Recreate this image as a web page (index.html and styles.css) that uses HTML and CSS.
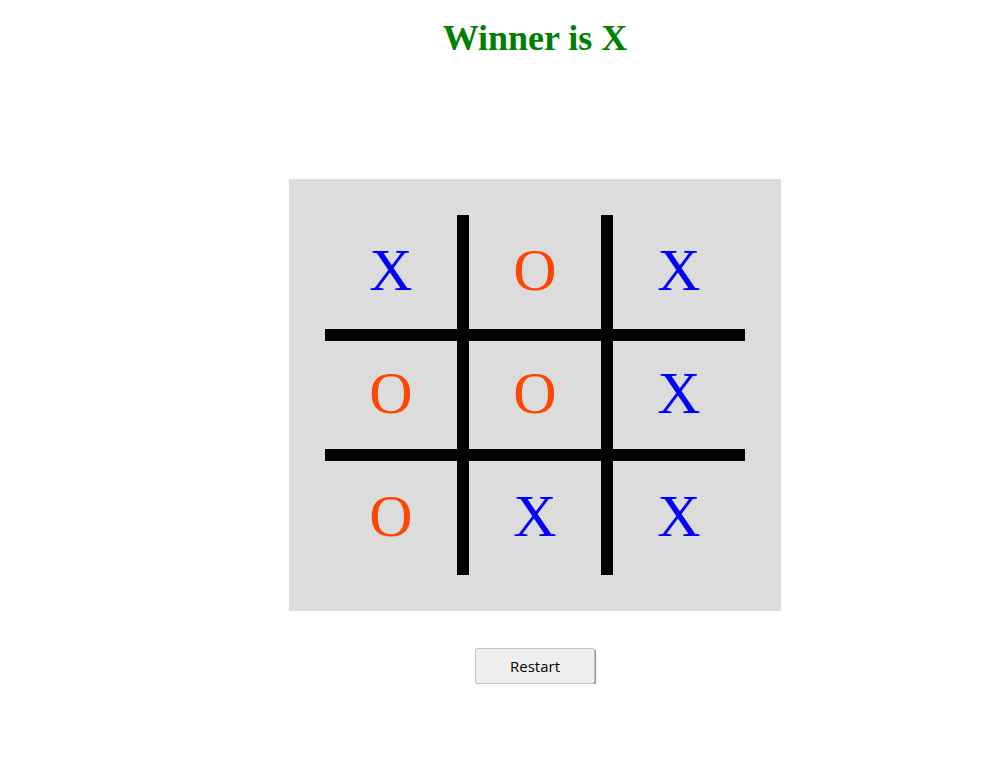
FILE: index.html
```html
<!DOCTYPE html>
<html>
<head>
<meta charset="utf-8">
<title>Tic Tac Toe</title>
<link rel="stylesheet" href="styles.css">
</head>
<body>
<div class="page">
  <h1 class="status">Winner is X</h1>
  <div class="board">
    <div class="grid">
      <div class="cell r1 c1 x">X</div>
      <div class="cell r1 c2 o">O</div>
      <div class="cell r1 c3 x">X</div>
      <div class="cell r2 c1 o">O</div>
      <div class="cell r2 c2 o">O</div>
      <div class="cell r2 c3 x">X</div>
      <div class="cell r3 c1 o">O</div>
      <div class="cell r3 c2 x">X</div>
      <div class="cell r3 c3 x">X</div>
      <div class="line vline v1"></div>
      <div class="line vline v2"></div>
      <div class="line hline h1"></div>
      <div class="line hline h2"></div>
    </div>
  </div>
  <button class="restart" type="button">Restart</button>
</div>
</body>
</html>
```
FILE: styles.css
```css
html, body {
  margin: 0;
  padding: 0;
  background: #ffffff;
}

.page {
  display: flex;
  flex-direction: column;
  align-items: center;
  padding-left: 74px;
}

.status {
  margin: 17px 0 0 0;
  font-family: "Liberation Serif", "Times New Roman", serif;
  font-size: 36px;
  font-weight: bold;
  color: #008000;
  line-height: normal;
}

.board {
  margin-top: 120px;
  padding: 36px;
  background: #dcdcdc;
}

.grid {
  display: grid;
  grid-template-columns: 132px 12px 132px 12px 132px;
  grid-template-rows: 114px 12px 108px 12px 114px;
}

.cell {
  display: flex;
  align-items: center;
  justify-content: center;
  padding-bottom: 4px;
  font-family: "Liberation Serif", "Times New Roman", serif;
  font-size: 60px;
  line-height: normal;
}

.cell.x { color: #0000ff; }
.cell.o { color: #ff4500; }

.r1 { grid-row: 1; }
.r2 { grid-row: 3; }
.r3 { grid-row: 5; }
.c1 { grid-column: 1; }
.c2 { grid-column: 3; }
.c3 { grid-column: 5; }

.line { background: #000000; }
.vline { grid-row: 1 / 6; }
.v1 { grid-column: 2; }
.v2 { grid-column: 4; }
.hline { grid-column: 1 / 6; }
.h1 { grid-row: 2; }
.h2 { grid-row: 4; }

.restart {
  margin-top: 37px;
  width: 120px;
  height: 36px;
  padding: 0;
  font-family: "Open Sans", "Noto Sans", sans-serif;
  font-size: 15px;
  color: #000000;
  background: #efefef;
  border: 1px solid #c2c2c2;
  border-radius: 3px;
  box-shadow: 1px 1px 1px #8a8a8a;
}
```
